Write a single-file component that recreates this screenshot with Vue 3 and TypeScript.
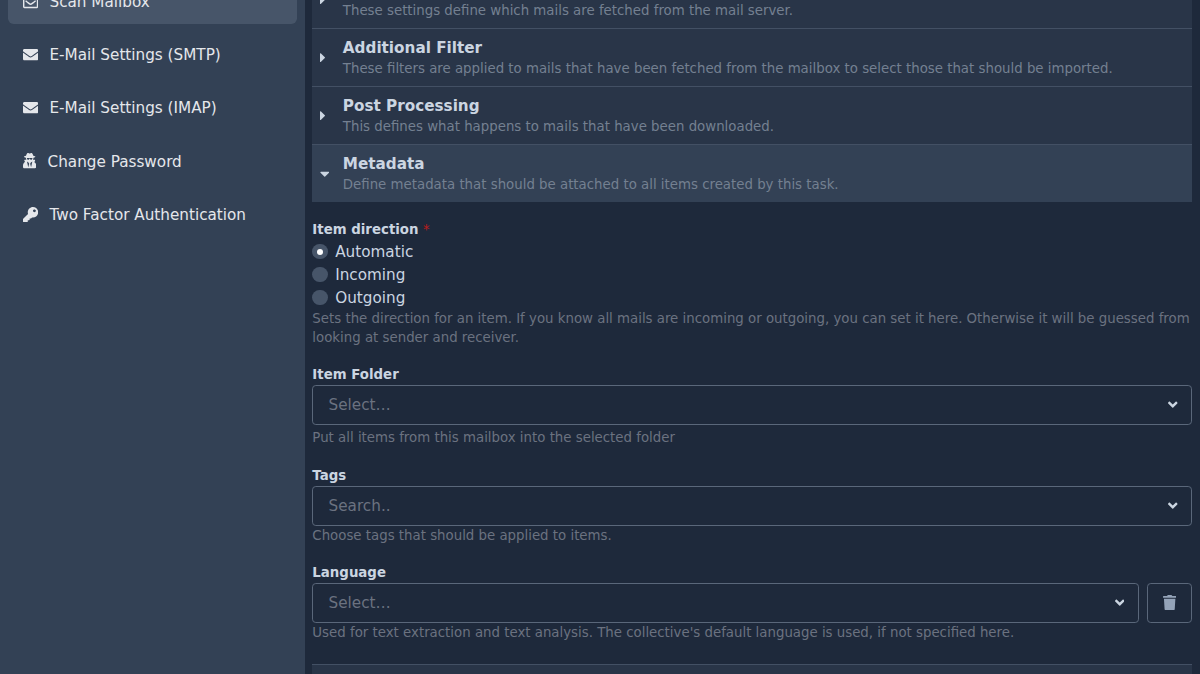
<script setup lang="ts">
interface Icon {
  w: number
  d: string
}

const icons: Record<string, Icon> = {
  envelopeOpen: {
    w: 512,
    d: 'M494.586 164.516c-4.697-3.883-111.723-89.95-135.251-108.657C337.231 38.163 299.437 0 256 0c-43.205 0-80.636 37.717-103.335 55.859-24.463 19.45-131.07 105.195-135.15 108.549A48.004 48.004 0 0 0 0 201.485V464c0 26.51 21.49 48 48 48h416c26.51 0 48-21.49 48-48V201.509a48 48 0 0 0-17.414-36.993zM464 458a6 6 0 0 1-6 6H54a6 6 0 0 1-6-6V204.347c0-1.813.816-3.526 2.226-4.665 15.87-12.814 108.793-87.554 132.364-106.293C200.755 78.88 232.398 48 256 48c23.693 0 55.857 31.369 73.41 45.389 23.573 18.741 116.503 93.493 132.366 106.316a5.99 5.99 0 0 1 2.224 4.663V458zm-31.991-187.704c4.249 5.159 3.465 12.795-1.745 16.981-28.975 23.283-59.274 47.597-70.929 56.863C336.636 362.283 299.205 400 256 400c-43.452 0-81.287-38.237-103.335-55.86-11.279-8.967-41.744-33.413-70.927-56.864-5.21-4.187-5.993-11.822-1.745-16.981l15.258-18.528c4.178-5.073 11.657-5.843 16.779-1.726 28.618 23.001 58.566 47.035 70.56 56.571C200.143 320.631 232.307 352 256 352c23.602 0 55.246-30.88 73.41-45.389 11.994-9.535 41.944-33.57 70.563-56.568 5.122-4.116 12.601-3.346 16.778 1.727l15.258 18.526z',
  },
  envelope: {
    w: 512,
    d: 'M502.3 190.8c3.9-3.1 9.7-.2 9.7 4.7V400c0 26.5-21.5 48-48 48H48c-26.5 0-48-21.5-48-48V195.6c0-5 5.7-7.8 9.7-4.7 22.4 17.4 52.1 39.5 154.1 113.6 21.1 15.4 56.7 47.8 92.2 47.6 35.7.3 72-32.8 92.3-47.6 102-74.1 131.6-96.3 154-113.7zM256 320c23.2.4 56.6-29.2 73.4-41.4 132.7-96.3 142.8-104.7 173.4-128.7 5.8-4.5 9.2-11.5 9.2-18.9v-19c0-26.5-21.5-48-48-48H48c-26.5 0-48 21.5-48 48v19c0 7.4 3.4 14.3 9.2 18.9 30.6 23.9 40.7 32.4 173.4 128.7 16.8 12.2 50.2 41.8 73.4 41.4z',
  },
  userSecret: {
    w: 448,
    d: 'M383.9 308.3l23.9-62.6c4-10.5-3.7-21.7-15-21.7h-58.5c11-18.9 17.8-40.6 17.8-64v-.3c39.2-7.8 64-19.1 64-31.7 0-13.3-27.3-25.1-70.1-33-9.2-32.8-27-65.8-40.6-82.8-9.5-11.9-25.9-15.6-39.5-8.8l-27.6 13.8c-9 4.5-19.6 4.5-28.6 0L182.1 3.4c-13.6-6.8-30-3.1-39.5 8.8-13.5 17-31.4 50-40.6 82.8-42.7 7.9-70 19.7-70 33 0 12.6 24.8 23.9 64 31.7v.3c0 23.4 6.8 45.1 17.8 64H56.3c-11.5 0-19.2 11.7-14.7 22.3l25.8 60.2C27.3 329.8 0 372.7 0 422.4v44.8C0 491.9 20.1 512 44.8 512h358.4c24.7 0 44.8-20.1 44.8-44.8v-44.8c0-48.4-25.8-90.4-64.1-114.1zM176 480l-41.6-192 49.6 32 24 40-32 120zm96 0l-32-120 24-40 49.6-32L272 480zm41.7-298.5c-3.9 11.9-7 24.6-16.5 33.4-10.1 9.3-48 22.4-64-25-2.8-8.4-15.4-8.4-18.3 0-17 50.2-56 32.4-64 25-9.5-8.8-12.7-21.5-16.5-33.4-.8-2.5-6.3-5.7-6.3-5.8v-10.8c28.3 3.6 61 5.8 96 5.8s67.7-2.1 96-5.8v10.8c-.1.1-5.6 3.2-6.4 5.8z',
  },
  key: {
    w: 512,
    d: 'M512 176.001C512 273.203 433.202 352 336 352c-11.22 0-22.19-1.062-32.827-3.069l-24.012 27.014A23.999 23.999 0 0 1 261.223 384H224v40c0 13.255-10.745 24-24 24h-40v40c0 13.255-10.745 24-24 24H24c-13.255 0-24-10.745-24-24v-78.059c0-6.365 2.529-12.47 7.029-16.971l161.802-161.802C163.108 213.814 160 195.271 160 176 160 78.798 238.797.001 335.999 0 433.488-.001 512 78.511 512 176.001zM336 128c0 26.51 21.49 48 48 48s48-21.49 48-48-21.49-48-48-48-48 21.49-48 48z',
  },
  trash: {
    w: 448,
    d: 'M432 32H312l-9.4-18.7A24 24 0 0 0 281.1 0H166.8a23.72 23.72 0 0 0-21.4 13.3L136 32H16A16 16 0 0 0 0 48v32a16 16 0 0 0 16 16h416a16 16 0 0 0 16-16V48a16 16 0 0 0-16-16zM53.2 467a48 48 0 0 0 47.9 45h245.8a48 48 0 0 0 47.9-45L416 128H32z',
  },
  angleDown: {
    w: 320,
    d: 'M143 352.3L7 216.3c-9.4-9.4-9.4-24.6 0-33.9l22.6-22.6c9.4-9.4 24.6-9.4 33.9 0l96.4 96.4 96.4-96.4c9.4-9.4 24.6-9.4 33.9 0l22.6 22.6c9.4 9.4 9.4 24.6 0 33.9l-136 136c-9.2 9.4-24.4 9.4-33.8 0z',
  },
  caretRight: {
    w: 192,
    d: 'M0 384.662V127.338c0-17.818 21.543-26.741 34.142-14.142l128.662 128.662c7.81 7.81 7.81 20.474 0 28.284L34.142 398.804C21.543 411.404 0 402.48 0 384.662z',
  },
  caretDown: {
    w: 320,
    d: 'M31.3 192h257.3c17.8 0 26.7 21.5 14.1 34.1L174.1 354.8c-7.8 7.8-20.5 7.8-28.3 0L17.2 226.1C4.6 213.5 13.5 192 31.3 192z',
  },
}

const viewBox = (name: string): string => `0 0 ${icons[name].w} 512`

const nav = [
  { icon: 'envelopeOpen', label: 'Scan Mailbox', active: true },
  { icon: 'envelope', label: 'E-Mail Settings (SMTP)', active: false },
  { icon: 'envelope', label: 'E-Mail Settings (IMAP)', active: false },
  { icon: 'userSecret', label: 'Change Password', active: false },
  { icon: 'key', label: 'Two Factor Authentication', active: false },
]

const sections = [
  { title: '', text: 'These settings define which mails are fetched from the mail server.', open: false },
  {
    title: 'Additional Filter',
    text: 'These filters are applied to mails that have been fetched from the mailbox to select those that should be imported.',
    open: false,
  },
  { title: 'Post Processing', text: 'This defines what happens to mails that have been downloaded.', open: false },
  { title: 'Metadata', text: 'Define metadata that should be attached to all items created by this task.', open: true },
]

const directions = ['Automatic', 'Incoming', 'Outgoing']
const selected = 'Automatic'

const fields = [
  { id: 'folder', label: 'Item Folder', hint: 'Select…', help: 'Put all items from this mailbox into the selected folder', clear: false },
  { id: 'tags', label: 'Tags', hint: 'Search..', help: 'Choose tags that should be applied to items.', clear: false },
  {
    id: 'language',
    label: 'Language',
    hint: 'Select…',
    help: "Used for text extraction and text analysis. The collective's default language is used, if not specified here.",
    clear: true,
  },
]
</script>

<template>
  <div class="page">
    <aside class="sidebar">
      <a v-for="item in nav" :key="item.label" class="nav-item" :class="{ active: item.active }">
        <svg class="icon" :class="item.icon" :viewBox="viewBox(item.icon)"><path :d="icons[item.icon].d" /></svg>
        <span class="text">{{ item.label }}</span>
      </a>
    </aside>
    <main class="content">
      <div class="accordion">
        <div v-for="s in sections" :key="s.text" class="section" :class="{ open: s.open }">
          <div class="caret">
            <svg class="icon" :class="s.open ? 'caretDown' : 'caretRight'" :viewBox="viewBox(s.open ? 'caretDown' : 'caretRight')">
              <path :d="icons[s.open ? 'caretDown' : 'caretRight'].d" />
            </svg>
          </div>
          <div>
            <div class="title">{{ s.title }}</div>
            <div class="summary">{{ s.text }}</div>
          </div>
        </div>
      </div>
      <div class="direction">
        <div class="label">Item direction <span class="required">*</span></div>
        <div class="radios">
          <label v-for="d in directions" :key="d" class="radio-row">
            <span class="radio" :class="{ checked: d === selected }"></span>
            <span class="text">{{ d }}</span>
          </label>
        </div>
        <div class="help">
          Sets the direction for an item. If you know all mails are incoming or outgoing, you can set it here. Otherwise it will be guessed from looking at sender and receiver.
        </div>
      </div>
      <div v-for="f in fields" :key="f.id" class="field" :class="f.id">
        <div class="label">{{ f.label }}</div>
        <div class="control">
          <div class="select">
            <span class="text">{{ f.hint }}</span>
            <svg class="icon angleDown" :viewBox="viewBox('angleDown')"><path :d="icons.angleDown.d" /></svg>
          </div>
          <div v-if="f.clear" class="clear">
            <svg class="icon trash" :viewBox="viewBox('trash')"><path :d="icons.trash.d" /></svg>
          </div>
        </div>
        <div class="help">{{ f.help }}</div>
      </div>
      <div class="section next"></div>
    </main>
  </div>
</template>

<style>
html {
  font-size: 15.238px;
}
body {
  margin: 0;
  background: #1e293b;
}
</style>

<style scoped>
.page,
.page * {
  box-sizing: border-box;
}
.page {
  display: flex;
  width: 1200px;
  height: 674px;
  overflow: hidden;
  background: #1e293b;
  color: #cbd5e1;
  font-family: "DejaVu Sans", sans-serif;
  font-size: 1rem;
  line-height: 1.5rem;
}
.text {
  padding-top: 1.6px;
}
.nav-item .text {
  padding-top: 2px;
}
.icon {
  display: block;
  height: 1em;
  width: 1em;
  fill: currentColor;
  flex: none;
}
.userSecret,
.trash {
  width: 0.875em;
}
.angleDown,
.caretDown {
  width: 0.625em;
}
.caretRight {
  width: 0.375em;
}
.sidebar {
  width: 20rem;
  flex: none;
  background: #334155;
  color: #e5e7eb;
  padding: 0 0.5rem;
}
.nav-item {
  display: flex;
  align-items: center;
  gap: 0.75rem;
  height: 3rem;
  padding: 0 1rem;
  margin-bottom: 0.5rem;
  border-radius: 0.375rem;
}
.nav-item:first-child {
  margin-top: -1.43rem;
}
.nav-item.active {
  background: #475569;
}
.content {
  flex: 1;
  min-width: 0;
  padding: 0 0.5rem;
}
.accordion {
  margin-top: -30px;
}
.section {
  display: flex;
  align-items: center;
  height: 3.8125rem;
  border-top: 1px solid #435064;
  background: #293548;
  padding: 0 0.5rem;
}
.section.open {
  background: #334155;
}
.caret {
  width: 1.5rem;
  flex: none;
}
.title {
  height: 1.5rem;
  font-weight: 700;
}
.summary {
  margin-top: -0.6px;
  margin-bottom: 0.6px;
  font-size: 0.875rem;
  line-height: 1.25rem;
  color: #748091;
}
.label {
  font-size: 0.875rem;
  line-height: 1.25rem;
  font-weight: 700;
}
.required {
  color: #b91c1c;
  font-weight: 400;
}
.help {
  font-size: 0.875rem;
  line-height: 1.25rem;
  color: #6b7280;
}
.direction {
  padding-top: 17.5px;
}
.radios {
  margin-top: 1.3px;
}
.radio-row {
  display: flex;
  align-items: center;
  gap: 0.5rem;
  height: 1.5rem;
}
.radio {
  display: flex;
  align-items: center;
  justify-content: center;
  width: 1rem;
  height: 1rem;
  border-radius: 50%;
  background: #475569;
}
.radio.checked::after {
  content: "";
  width: 6px;
  height: 6px;
  border-radius: 50%;
  background: #fff;
}
.field {
  padding-top: 18px;
}
.folder {
  padding-top: 17.7px;
}
.tags {
  padding-top: 18.9px;
}
.control {
  display: flex;
  gap: 0.5rem;
  margin-top: 1px;
}
.folder .control {
  margin-bottom: 3px;
}
.select {
  flex: 1;
  display: flex;
  align-items: center;
  justify-content: space-between;
  height: 2.625rem;
  padding: 0 0.9rem 0 1rem;
  border: 1px solid #5a677a;
  border-radius: 0.25rem;
  color: #6b7280;
}
.select .icon {
  color: #cbd5e1;
}
.clear {
  display: flex;
  align-items: center;
  justify-content: center;
  width: 3rem;
  border: 1px solid #5a677a;
  border-radius: 0.25rem;
  color: #94a3b8;
}
.next {
  margin-top: 1.46rem;
}
</style>
